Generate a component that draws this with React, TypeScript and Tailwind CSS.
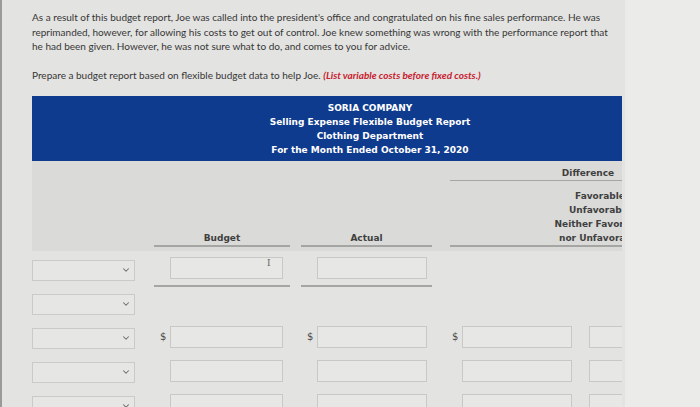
import React from "react";
import { ChevronDown } from "lucide-react";

function Sel() {
  return (
    <div className="mt-[7px] flex h-[21px] w-[103px] shrink-0 items-center justify-end border border-[#cacac8] bg-[#e6e6e4] pr-[3px]">
      <ChevronDown size={10} strokeWidth={2.5} color="#6a6a6a" />
    </div>
  );
}

function Inp({ w, cursor }: { w: string; cursor?: boolean }) {
  return (
    <div className={`relative h-[22px] shrink-0 border border-[#c8c8c6] bg-[#e7e7e5] ${w}`}>
      {cursor ? (
        <span className="absolute left-[96px] top-[-1px] font-['DejaVu_Serif',serif] text-[9px] leading-[12px] text-[#666]">I</span>
      ) : null}
    </div>
  );
}

function Dollar() {
  return <span className="w-[10px] shrink-0 font-['DejaVu_Sans',sans-serif] text-[10px] leading-[22px] text-[#4a4a4a]">$</span>;
}

function Row({ kind }: { kind: "first" | "empty" | "dollar" | "plain" }) {
  if (kind === "first") {
    return (
      <div className="flex h-[34px] items-start">
        <Sel />
        <div className="ml-[19px] mt-[4px] flex w-[136px] shrink-0 flex-col">
          <div className="flex pl-[16px]">
            <Inp w="w-[113px]" cursor />
          </div>
          <div className="mt-[6px] border-b-2 border-[#a5a5a3]" />
        </div>
        <div className="ml-[11px] mt-[4px] flex w-[131px] shrink-0 flex-col">
          <div className="flex pl-[16px]">
            <Inp w="w-[110px]" />
          </div>
          <div className="mt-[6px] border-b-2 border-[#a5a5a3]" />
        </div>
      </div>
    );
  }
  if (kind === "empty") {
    return (
      <div className="flex h-[34px] items-start">
        <Sel />
      </div>
    );
  }
  const d = kind === "dollar";
  return (
    <div className="flex h-[34px] items-start">
      <Sel />
      <div className="ml-[19px] mt-[5px] flex w-[136px] shrink-0 pl-[6px]">
        {d ? <Dollar /> : <span className="w-[10px] shrink-0" />}
        <Inp w="w-[113px]" />
      </div>
      <div className="ml-[11px] mt-[5px] flex w-[131px] shrink-0 pl-[6px]">
        {d ? <Dollar /> : <span className="w-[10px] shrink-0" />}
        <Inp w="w-[110px]" />
      </div>
      <div className="ml-[18px] mt-[5px] flex shrink-0 pl-[2px]">
        {d ? <Dollar /> : <span className="w-[10px] shrink-0" />}
        <Inp w="w-[110px]" />
        <div className="ml-[17px]">
          <Inp w="w-[100px]" />
        </div>
      </div>
    </div>
  );
}

export default function App() {
  const hdr = "font-['DejaVu_Sans',Verdana,sans-serif] font-bold text-[9px] text-[#3f3f3f]";
  return (
    <div className="flex h-[407px] w-[700px] overflow-hidden bg-[#e3e3e1]">
      <div className="w-[2px] shrink-0 bg-[#9a9a98]" />
      <div className="w-[623px] shrink-0 pl-[30px] pt-[10px]">
        <div className="font-['Lato',sans-serif] text-[10px] leading-[14.5px] text-[#363636]">
          <div className="whitespace-nowrap">As a result of this budget report, Joe was called into the president's office and congratulated on his fine sales performance. He was</div>
          <div className="whitespace-nowrap">reprimanded, however, for allowing his costs to get out of control. Joe knew something was wrong with the performance report that</div>
          <div className="whitespace-nowrap">he had been given. However, he was not sure what to do, and comes to you for advice.</div>
          <div className="mt-[14.5px] whitespace-nowrap">
            Prepare a budget report based on flexible budget data to help Joe.{" "}
            <span className="font-bold italic text-[#c8202e]">(List variable costs before fixed costs.)</span>
          </div>
        </div>
        <div className="mt-[13px] w-[590px] overflow-hidden">
          <div className="flex h-[65px] w-[676px] flex-col items-center bg-[#0f3b8e] pt-[5px] font-['DejaVu_Sans',Verdana,sans-serif] text-[9px] font-bold leading-[14px] text-white">
            <div>SORIA COMPANY</div>
            <div>Selling Expense Flexible Budget Report</div>
            <div>Clothing Department</div>
            <div>For the Month Ended October 31, 2020</div>
          </div>
          <div className="flex h-[90px] bg-[#dadad8]">
            <div className="w-[122px] shrink-0" />
            <div className="flex w-[136px] shrink-0 flex-col justify-end pb-[4px]">
              <div className={`text-center leading-[14px] ${hdr}`}>Budget</div>
              <div className="border-b-2 border-[#a5a5a3]" />
            </div>
            <div className="ml-[11px] flex w-[131px] shrink-0 flex-col justify-end pb-[4px]">
              <div className={`text-center leading-[14px] ${hdr}`}>Actual</div>
              <div className="border-b-2 border-[#a5a5a3]" />
            </div>
            <div className="ml-[18px] flex w-[300px] shrink-0 flex-col pb-[4px] pt-[5px]">
              <div className={`w-[276px] text-center leading-[14px] ${hdr}`}>Difference</div>
              <div className="border-b border-[#a5a5a3]" />
              <div className={`mt-auto text-center leading-[14px] ${hdr}`}>
                <div>Favorable</div>
                <div>Unfavorable</div>
                <div>Neither Favorable</div>
                <div>nor Unfavorable</div>
              </div>
              <div className="border-b-2 border-[#a5a5a3]" />
            </div>
          </div>
          <div className="pt-[2px]">
            <Row kind="first" />
            <Row kind="empty" />
            <Row kind="dollar" />
            <Row kind="plain" />
            <Row kind="plain" />
          </div>
        </div>
      </div>
      <div className="flex-1 bg-[#ebebe9]" />
    </div>
  );
}
